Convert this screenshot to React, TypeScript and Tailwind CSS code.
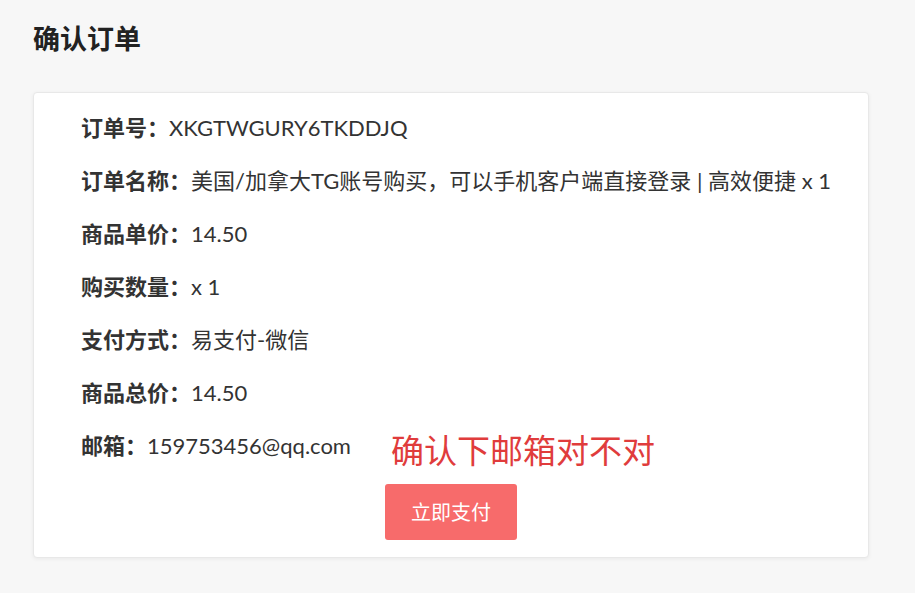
export default function App() {
  const rows: [string, string][] = [
    ['订单号：', 'XKGTWGURY6TKDDJQ'],
    ['订单名称：', '美国/加拿大TG账号购买，可以手机客户端直接登录 | 高效便捷 x 1'],
    ['商品单价：', '14.50'],
    ['购买数量：', 'x 1'],
    ['支付方式：', '易支付-微信'],
    ['商品总价：', '14.50'],
  ]

  return (
    <div
      className="min-h-[593px] bg-[#f7f7f7] px-[33px] pt-[22px] pb-[36px] text-[#333]"
      style={{ fontFamily: 'Lato, "Noto Sans CJK SC", sans-serif' }}
    >
      {/* page title */}
      <h1 className="text-[27px] font-bold leading-[34px] text-[#222]">确认订单</h1>

      {/* order card */}
      <div className="mt-[36px] w-[836px] rounded-[4px] border border-[#e8e8e8] bg-white px-[47px] pt-[20px] pb-[17px] shadow-[0_1px_4px_rgba(0,0,0,0.06)]">
        <div className="flex flex-col gap-[23px] text-[22px] leading-[30px]">
          {rows.map(([label, value]) => (
            <div key={label} className="flex whitespace-nowrap">
              <span className="shrink-0 font-bold text-[#333]">{label}</span>
              <span>{value}</span>
            </div>
          ))}
          <div className="flex h-[30px] items-center whitespace-nowrap">
            <span className="shrink-0 font-bold text-[#333]">邮箱：</span>
            <span>159753456@qq.com</span>
            <span className="ml-[40px] translate-y-[4px] text-[33px] leading-[40px] text-[#e03c3c]">确认下邮箱对不对</span>
          </div>
        </div>
        <div className="mt-[23px] flex justify-center">
          <button className="h-[56px] w-[132px] rounded-[3px] bg-[#f76b6b] text-[20px] text-white">
            立即支付
          </button>
        </div>
      </div>
    </div>
  )
}
